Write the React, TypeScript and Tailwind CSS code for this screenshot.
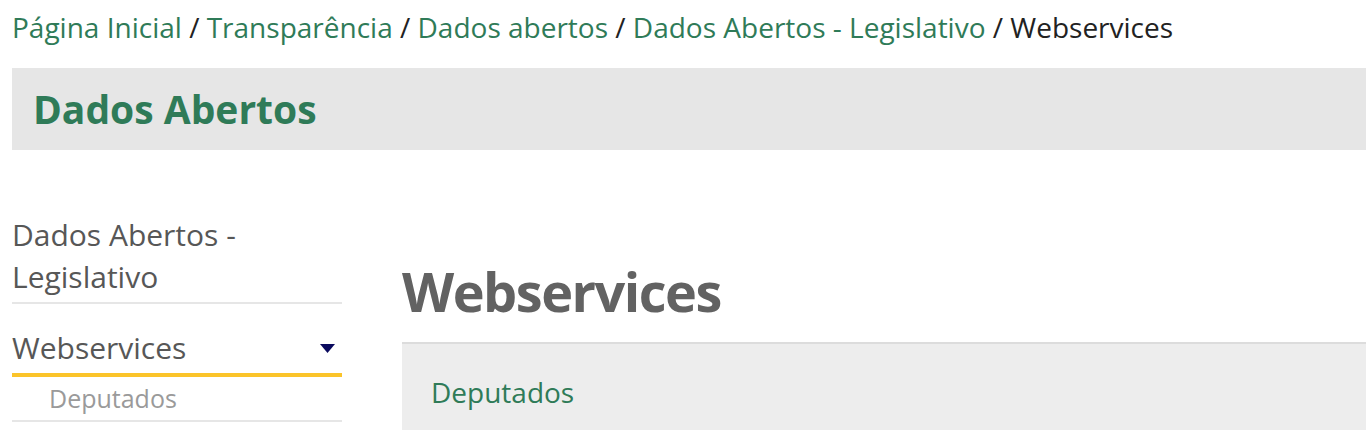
import React from "react";

const crumbs = [
  "Página Inicial",
  "Transparência",
  "Dados abertos",
  "Dados Abertos - Legislativo",
];

function Breadcrumb() {
  return (
    <nav className="pt-[7px] text-[28px] leading-[40px] text-[#222] whitespace-nowrap">
      {crumbs.map((c) => (
        <React.Fragment key={c}>
          <a className="text-[#2f7b58]">{c}</a>
          <span> / </span>
        </React.Fragment>
      ))}
      <span>Webservices</span>
    </nav>
  );
}

function Sidebar() {
  return (
    <aside className="w-[330px] shrink-0 mt-[64px]">
      <div className="text-[30px] leading-[42px] text-[#575757] pb-[4px] border-b-2 border-[#e6e6e6]">
        Dados Abertos -
        <br />
        Legislativo
      </div>
      <div className="mt-[23px] flex items-center justify-between pr-[7px] pb-[4px] border-b-4 border-[#fbc42a]">
        <span className="text-[30px] leading-[42px] text-[#575757]">
          Webservices
        </span>
        <svg width="15" height="9" viewBox="0 0 15 9">
          <path d="M0 0 H15 L7.5 9 Z" fill="#0a0a5e" />
        </svg>
      </div>
      <div className="mt-[4px] pl-[37px] pb-[5px] text-[25px] leading-[34px] text-[#9a9a9a] border-b-2 border-[#e6e6e6]">
        Deputados
      </div>
    </aside>
  );
}

export default function App() {
  return (
    <div
      className="w-[1366px] h-[430px] overflow-hidden bg-white pl-[12px]"
      style={{ fontFamily: '"Open Sans", "Liberation Sans", sans-serif' }}
    >
      <Breadcrumb />
      <header className="mt-[21px] h-[82px] bg-[#e6e6e6] pl-[21px]">
        <h1 className="text-[39px] leading-[82px] font-bold text-[#2f7b58]">
          Dados Abertos
        </h1>
      </header>
      <div className="flex gap-[60px]">
        <Sidebar />
        <main className="flex-1 mt-[108px]">
          <h2 className="text-[54px] leading-[67px] font-bold tracking-[-1.5px] text-[#626262]">
            Webservices
          </h2>
          <div className="mt-[17px] h-[120px] border-t-2 border-[#dcdcdc] bg-[#ededed] pt-[30px] pl-[29px]">
            <a className="text-[28px] leading-[36px] text-[#2f7b58]">
              Deputados
            </a>
          </div>
        </main>
      </div>
    </div>
  );
}
